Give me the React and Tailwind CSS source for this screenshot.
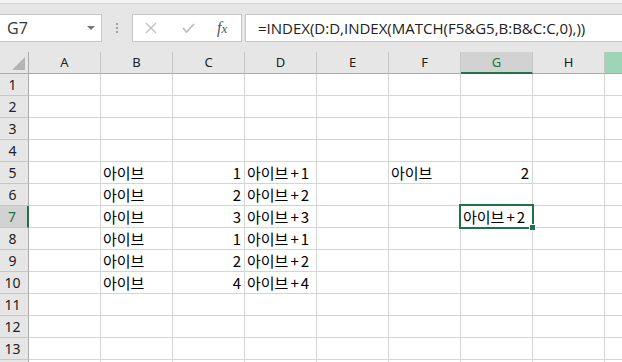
import React from "react";

const cols = ["A", "B", "C", "D", "E", "F", "G", "H"];
const K = "아이브";
const data = {
  5: { B: K, C: "1", D: K + "+1", F: K, G: "2" },
  6: { B: K, C: "2", D: K + "+2" },
  7: { B: K, C: "3", D: K + "+3", G: K + "+2" },
  8: { B: K, C: "1", D: K + "+1" },
  9: { B: K, C: "2", D: K + "+2" },
  10: { B: K, C: "4", D: K + "+4" },
};
const numeric = (v) => /^\d+$/.test(v);

function Txt({ v }) {
  if (!v.includes("+")) return <>{v}</>;
  const [a, b] = v.split("+");
  return (
    <>
      {a}
      <span className="mx-[2px]">+</span>
      {b}
    </>
  );
}

function Cell({ v, active }) {
  const num = v && numeric(v);
  return (
    <div
      className={
        "relative h-[22px] w-[72px] shrink-0 border-r border-b border-[#d4d4d4] flex items-center text-[15px] text-black " +
        (num ? "justify-end pr-[3px]" : "justify-start pl-[2px]") +
        (active ? " z-10" : "")
      }
      style={{ fontFamily: '"Noto Sans CJK KR", "Noto Sans", sans-serif' }}
    >
      {v && (
        <span className="whitespace-nowrap leading-none">
          <Txt v={v} />
        </span>
      )}
      {active && (
        <>
          <div className="absolute left-[-2px] top-[-2px] right-[-2px] bottom-[-2px] border-2 border-[#217346] pointer-events-none" />
          <div className="absolute right-[-4px] bottom-[-4px] w-[7px] h-[7px] bg-[#217346] border border-white" />
        </>
      )}
    </div>
  );
}

export default function App() {
  const rows = Array.from({ length: 14 }, (_, i) => i + 1);
  return (
    <div className="w-[622px] h-[362px] overflow-hidden bg-white" style={{ fontFamily: '"Noto Sans", sans-serif' }}>
      {/* top strip */}
      <div className="h-[4px] bg-[#f3f3f3] border-b border-[#d5d5d5]" />
      {/* formula bar */}
      <div className="h-[48px] bg-[#e6e6e6] flex items-start pt-[10px]">
        <div className="w-[102px] h-[28px] bg-white border border-l-0 border-[#c6c6c6] flex items-center justify-between pl-[7px] pr-[6px]">
          <span className="text-[16px] text-[#333] leading-none" style={{ fontFamily: '"Open Sans", sans-serif' }}>G7</span>
          <svg width="8" height="4" viewBox="0 0 8 4"><path d="M0 0H8L4 4Z" fill="#777" /></svg>
        </div>
        <div className="w-[30px] h-[28px] flex flex-col items-center justify-center gap-[2px]">
          <div className="w-[2px] h-[2px] bg-[#a0a0a0]" />
          <div className="w-[2px] h-[2px] bg-[#a0a0a0]" />
          <div className="w-[2px] h-[2px] bg-[#a0a0a0]" />
        </div>
        <div className="w-[110px] h-[28px] bg-white border border-[#c6c6c6] flex items-center">
          <svg className="ml-[12px]" width="12" height="12" viewBox="0 0 12 12"><path d="M1 1L11 11M11 1L1 11" stroke="#c0c0c0" strokeWidth="1.4" /></svg>
          <svg className="ml-[25px]" width="13" height="10" viewBox="0 0 13 10"><path d="M1 5L4.5 9L12 1" stroke="#c0c0c0" strokeWidth="1.8" fill="none" /></svg>
          <span className="ml-[22px] text-[16px] text-[#555] italic leading-none" style={{ fontFamily: '"Liberation Serif", serif' }}>
            f<span className="text-[13px]">x</span>
          </span>
        </div>
        <div className="ml-[3px] flex-1 h-[28px] bg-white border border-r-0 border-[#c6c6c6] flex items-center pl-[12px]">
          <span className="text-[15px] text-[#222] whitespace-nowrap leading-none" style={{ fontFamily: '"Open Sans", sans-serif' }}>
            =INDEX(D:D,INDEX(MATCH(F5&amp;G5,B:B&amp;C:C,0),))
          </span>
        </div>
      </div>
      {/* column headers */}
      <div className="flex h-[22px]">
        <div className="relative w-[29px] shrink-0 h-[22px] bg-[#e6e6e6] border-r border-b border-[#ababab]">
          <svg className="absolute left-[12px] top-[5px]" width="13" height="13" viewBox="0 0 13 13"><path d="M13 0V13H0Z" fill="#b4b4b4" /></svg>
        </div>
        {cols.map((c) => {
          const sel = c === "G";
          return (
            <div
              key={c}
              className={
                "w-[72px] shrink-0 h-[22px] flex items-center justify-center text-[13px] border-r border-[#c6c6c6] " +
                (sel ? "bg-[#d2d2d2] border-b-2 border-b-[#217346] text-[#217346]" : "bg-[#e6e6e6] border-b border-b-[#ababab] text-[#222]")
              }
            >
              <span className="leading-none">{c}</span>
            </div>
          );
        })}
        <div className="flex-1 h-[22px] bg-[#9fd5b7] border-b border-[#ababab]" />
      </div>
      {/* rows */}
      {rows.map((r) => {
        const sel = r === 7;
        const d = data[r] || {};
        return (
          <div key={r} className="flex">
            <div
              className={
                "w-[29px] shrink-0 h-[22px] flex items-center justify-center pr-[3px] text-[14px] border-b border-[#c6c6c6] " +
                (sel ? "bg-[#d2d2d2] border-r-2 border-r-[#217346] text-[#217346]" : "bg-[#e6e6e6] border-r border-r-[#ababab] text-[#222]")
              }
            >
              {r < 14 && <span className="leading-none">{r}</span>}
            </div>
            {cols.map((c) => (
              <Cell key={c} v={d[c]} active={r === 7 && c === "G"} />
            ))}
            <div className="flex-1 h-[22px] border-b border-[#d4d4d4]" />
          </div>
        );
      })}
    </div>
  );
}
